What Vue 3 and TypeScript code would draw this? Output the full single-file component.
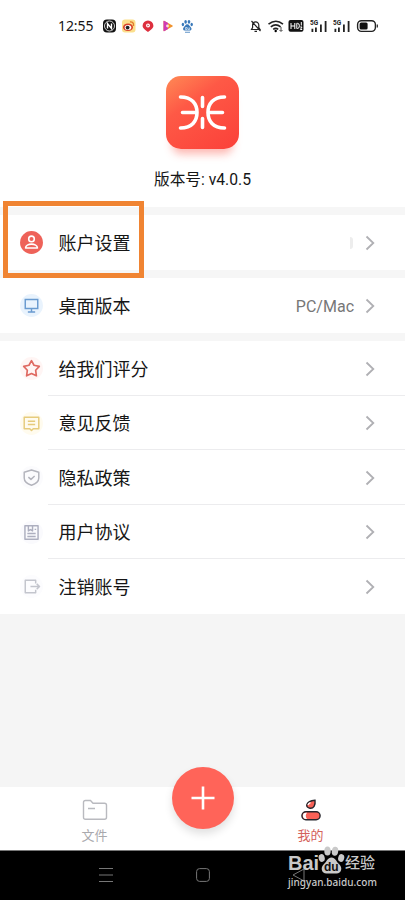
<script setup lang="ts">
interface Item {
  label: string
  icon: 'star' | 'note' | 'shield' | 'doc' | 'exit'
}

const items: Item[] = [
  { label: '给我们评分', icon: 'star' },
  { label: '意见反馈', icon: 'note' },
  { label: '隐私政策', icon: 'shield' },
  { label: '用户协议', icon: 'doc' },
  { label: '注销账号', icon: 'exit' },
]
</script>

<template>
  <div class="phone">
    <header class="status">
      <span class="clock">12:55</span>
      <svg class="apps" width="96" height="16" viewBox="0 0 96 16">
        <rect x="1" y="1.5" width="13" height="13" rx="4" fill="#111" />
        <circle cx="7.5" cy="8" r="5" fill="none" stroke="#fff" stroke-width="0.8" />
        <path d="M5.5 10.5v-5l4 5v-5" fill="none" stroke="#fff" stroke-width="1.4" />
        <rect x="20" y="1.5" width="13.5" height="13" rx="3" fill="#fbdf8c" />
        <ellipse cx="26" cy="9.3" rx="5" ry="3.8" fill="#d8432c" />
        <ellipse cx="26" cy="9.5" rx="3.3" ry="2.5" fill="#fff" />
        <circle cx="25.6" cy="9.6" r="1.9" fill="#222" />
        <path d="M28 4q4-.5 3.5 4" fill="none" stroke="#e27a2e" stroke-width="1.3" />
        <path d="M46 2.5a5.400 5.200 0 0 1 5.400 5.200c0 2.600-2.600 4-5.400 6.300-2.800-2.300-5.400-3.700-5.400-6.300A5.400 5.200 0 0 1 46 2.500z" fill="#dd2f3e" />
        <circle cx="46" cy="7.6" r="2" fill="#fff" />
        <path d="M45.400 6.600l1.700 1-1.700 1z" fill="#dd2f3e" />
        <path d="M61.500 3.500q0-1 1-.5l8 4.500q.7.5 0 1l-8 4.500q-1 .5-1-.5z" fill="#f0932e" />
        <path d="M61.500 3.500q0-1 1-.5l3.500 2v6l-3.500 2q-1 .5-1-.5z" fill="#cf3bb5" />
        <circle cx="65.500" cy="8" r="1.400" fill="#fbe3d0" />
        <g fill="#3979ba">
          <ellipse cx="80.900" cy="6.500" rx="1.200" ry="1.700" />
          <ellipse cx="83.600" cy="3.800" rx="1.300" ry="1.900" />
          <ellipse cx="87" cy="3.800" rx="1.300" ry="1.900" />
          <ellipse cx="89.700" cy="6.500" rx="1.200" ry="1.700" />
          <path d="M85.300 6.300c2 0 2.200 2 3.500 3s.9 3.500-1.200 3.300h-4.600c-2.100.2-2.500-2.300-1.200-3.300s1.500-3 3.500-3z" />
          <rect x="83" y="13.800" width="5" height="0.800" />
        </g>
        <path d="M83.500 9.500h1.500v2h-1.500zM86 9.500v2h1.600v-2" fill="none" stroke="#fff" stroke-width="0.600" />
      </svg>
      <svg class="signals" width="130" height="16" viewBox="0 0 130 16">
        <g fill="none" stroke="#222" stroke-width="1.200">
          <path d="M2.500 11.500h8.500l-1.200-2V7a3.100 3.100 0 0 0-6.200 0v2.500zM5.500 13.300H8M2.500 3l9 10" />
        </g>
        <g fill="none" stroke="#222" stroke-width="1.600">
          <path d="M19.500 6.200q7.500-5.800 14.500 0M21.800 8.900q5-4 9.800 0M24.200 11.400q2.500-2 5 0" />
        </g>
        <circle cx="26.700" cy="13" r="1.200" />
        <path d="M32 9v4M30.500 12l1.500 1.500 1.500-1.500" fill="none" stroke="#222" stroke-width="0.800" />
        <rect x="39.500" y="2" width="15" height="11.800" rx="2" fill="#111" />
        <path d="M42 5v6M45.800 5v6M42 8h3.800M47.800 5.300v5.200h.6q2 0 2-2.600t-2-2.600zM52.300 4v3.500M51.200 9h1.800l-1.600 2.500h1.800" fill="none" stroke="#fff" stroke-width="1" />
        <g fill="#222">
          <text x="61" y="7.200">5G</text>
          <path d="M62.500 10.800h1.800V14h-1.800zM66 9.500h1.800V14H66zM71 6.500h1.800V14H71zM75.700 3h1.800v11h-1.800z" />
          <text x="84" y="7.200">5G</text>
          <path d="M85.500 10.800h1.800V14h-1.800zM89 9.500h1.800V14H89zM94 6.500h1.800V14H94zM98.700 3h1.800v11h-1.800z" />
        </g>
        <rect x="108.600" y="2.700" width="17.800" height="10.700" rx="3.800" fill="none" stroke="#222" stroke-width="1.400" />
        <rect x="110.600" y="4.600" width="8" height="6.900" rx="1.500" fill="#111" />
        <path d="M128.300 6.500v3" stroke="#222" stroke-width="1.200" />
      </svg>
    </header>

    <section class="brand">
      <div class="logo">
        <svg width="73" height="73" viewBox="0 0 73 73" fill="none" stroke="#fff" stroke-width="3.600" stroke-linecap="round">
          <path d="M14.500 21c11.500 0 16.500 7 16.500 15.500S26 52 14.500 52M16.500 36.500H30M58.500 21C47 21 42 28 42 36.500S47 52 58.500 52M56.500 36.500H43M36.500 21.500v9M36.500 42.500v9" />
        </svg>
      </div>
      <div class="version">版本号: v4.0.5</div>
    </section>

    <div class="row account">
      <svg class="icon" viewBox="0 0 24 24">
        <circle cx="12" cy="12" r="11" fill="#ee6259" />
        <g fill="none" stroke="#fff" stroke-width="1.500">
          <circle cx="12" cy="8.600" r="2.700" />
          <path d="M6.300 17.300c0-5 11.400-5 11.400 0z" stroke-linejoin="round" />
        </g>
      </svg>
      <span class="label">账户设置</span>
      <span class="ghost"></span>
      <svg class="arrow" viewBox="0 0 10 16"><path d="M1.500 1.500L8.300 8l-6.800 6.500" /></svg>
    </div>

    <div class="row desktop">
      <svg class="icon" viewBox="0 0 24 24">
        <circle cx="12" cy="12" r="11" fill="#e9f3fd" />
        <path d="M6 6.300h12v8.500H6zM12 15v2.700M8.500 18.200h7" fill="none" stroke="#6a9bd0" stroke-width="1.400" />
      </svg>
      <span class="label">桌面版本</span>
      <span class="value">PC/Mac</span>
      <svg class="arrow" viewBox="0 0 10 16"><path d="M1.500 1.500L8.300 8l-6.800 6.500" /></svg>
    </div>

    <main class="list">
      <div v-for="item in items" :key="item.icon" class="row item">
        <svg class="icon" viewBox="0 0 24 24" fill="none" stroke-width="1.400" stroke-linejoin="round">
          <template v-if="item.icon === 'star'">
            <circle cx="12" cy="12" r="11" fill="#fff5f4" />
            <path d="M12 4.500l2.400 4.400 5.100 1-3.500 3.800.7 5.300-4.700-2.200L7.300 19l.7-5.300-3.500-3.800 5.100-1z" stroke="#df6961" stroke-width="1.600" />
          </template>
          <template v-else-if="item.icon === 'note'">
            <circle cx="12" cy="12" r="11" fill="#fffbee" />
            <path d="M5 6h14v11h-5.300L12 18.800 10.300 17H5zM8.500 9.800h7M8.500 13h7" stroke="#e6cb7c" />
          </template>
          <template v-else-if="item.icon === 'shield'">
            <circle cx="12" cy="12" r="11" fill="#fbfbfd" />
            <path d="M12 4.800l7 2.200v5.500c0 3.200-2.500 5.500-7 7-4.500-1.500-7-3.800-7-7V7zM9 11.600l2.500 2.200 3.500-3.200" stroke="#b3b4bc" />
          </template>
          <template v-else-if="item.icon === 'doc'">
            <circle cx="12" cy="12" r="11" fill="#fafafd" />
            <path d="M5.700 5.500h12.600v13H5.700zM9 5.500v5l2-1.300 2 1.300v-5M15 9h1.500M8 13h8M8 15.800h8" stroke="#adafbf" />
          </template>
          <template v-else>
            <circle cx="12" cy="12" r="11" fill="#fcfcfe" />
            <path d="M16 9V6H6v12h10v-3M11 12h9M17 9.500l2.700 2.500-2.700 2.500" stroke="#c3c5cd" />
          </template>
        </svg>
        <span class="label">{{ item.label }}</span>
        <svg class="arrow" viewBox="0 0 10 16"><path d="M1.500 1.500L8.300 8l-6.800 6.500" /></svg>
      </div>
    </main>

    <div class="filler"></div>

    <footer class="tabs">
      <div class="tab">
        <svg width="26" height="22" viewBox="0 0 26 22" fill="none" stroke="#b9babf" stroke-width="1.400">
          <path d="M1.500 3.500q0-2 2-2h5L11 4.200h11.500q2 0 2 2v12q0 2-2 2h-19q-2 0-2-2zM6 9.500h7" />
        </svg>
        <span>文件</span>
      </div>
      <button class="add" aria-label="add">
        <svg width="24" height="24" viewBox="0 0 24 24"><path d="M12 .5v23M.5 12h23" stroke="#fff" stroke-width="2.600" /></svg>
      </button>
      <div class="tab active">
        <svg width="22" height="22" viewBox="0 0 22 22" stroke="#24252c" stroke-width="1.400">
          <path d="M15 1.200c.7 5.300-1.500 8.300-5 8-5-.5-5-7 5-8z" fill="#f86157" />
          <path d="M8 6q.7-1.700 2.500-2.300" fill="none" stroke="#fff" />
          <rect x="1.900" y="12.800" width="18.200" height="8" rx="4" fill="#f86157" />
          <path d="M7 13.700H6a3.100 3.100 0 0 0 0 6.200h1a5 5 0 0 1 0-6.200z" fill="#fff" stroke="none" />
        </svg>
        <span>我的</span>
      </div>
    </footer>

    <nav class="nav">
      <svg width="14" height="14" viewBox="0 0 14 14"><path d="M0 .5h14M0 7h14M0 13.500h14" /></svg>
      <svg width="14" height="14" viewBox="0 0 14 14"><rect x=".6" y=".6" width="12.800" height="12.800" rx="3" /></svg>
      <svg width="14" height="14" viewBox="0 0 14 14"><path d="M12 1v12L1 7z" /></svg>
    </nav>

    <div class="highlight"></div>

    <div class="mark">
      <div class="mark-top">
        <span class="latin">Bai</span>
        <svg width="27" height="29" viewBox="0 0 27 29">
          <g fill="#c9c9c9">
            <ellipse cx="3.700" cy="12" rx="3" ry="4" transform="rotate(-15 3.700 12)" />
            <ellipse cx="9.500" cy="5" rx="3.200" ry="4.500" />
            <ellipse cx="17" cy="5.300" rx="3.200" ry="4.500" transform="rotate(8 17 5.300)" />
            <ellipse cx="23.200" cy="12" rx="3" ry="4" transform="rotate(15 23.200 12)" />
            <path d="M13.500 11.500c4 0 4.500 4 7.500 6.500 4 3.500 2.500 9.500-2.500 9.500h-10c-5 0-6.500-6-2.500-9.500 3-2.500 3.500-6.500 7.500-6.500z" />
          </g>
          <text x="13.300" y="25" text-anchor="middle">du</text>
        </svg>
        <span class="cn">经验</span>
      </div>
      <div class="mark-url">jingyan.baidu.com</div>
    </div>
  </div>
</template>

<style>
body {
  margin: 0;
  background: #fff;
}
</style>

<style scoped>
.phone {
  position: relative;
  box-sizing: border-box;
  width: 405px;
  height: 900px;
  overflow: hidden;
  display: flex;
  flex-direction: column;
  background: #fff;
  color: #161616;
  font-family: Roboto, "Noto Sans CJK SC", sans-serif;
}
.status {
  height: 52px;
  box-sizing: border-box;
  padding: 0 24px 0 58px;
  display: flex;
  align-items: center;
  flex-shrink: 0;
}
.clock {
  width: 44px;
  font-size: 14px;
  line-height: 20px;
  padding-bottom: 1px;
  font-family: "Noto Sans", sans-serif;
  letter-spacing: -0.1px;
}
.signals {
  margin-left: 51px;
  flex-shrink: 0;
}
.apps {
  flex-shrink: 0;
}
.signals text {
  font: bold 6.5px Roboto, sans-serif;
}
.brand {
  height: 155px;
  box-sizing: border-box;
  padding-top: 24px;
  display: flex;
  flex-direction: column;
  align-items: center;
  flex-shrink: 0;
}
.logo {
  width: 73px;
  height: 73px;
  border-radius: 15px;
  background: linear-gradient(145deg, #ff8a55 0%, #fe5946 35%, #fb4039 100%);
  box-shadow: 0 11px 9px -6px rgba(250, 75, 60, 0.4);
}
.version {
  margin-top: 18px;
  font-size: 15.7px;
  line-height: 25px;
}
.row {
  box-sizing: border-box;
  padding: 0 30px 0 19px;
  display: flex;
  align-items: center;
  flex-shrink: 0;
}
.account {
  height: 71px;
  border-top: 8px solid #f6f6f6;
  border-bottom: 8px solid #f6f6f6;
}
.desktop {
  height: 63px;
  border-bottom: 8px solid #f6f6f6;
}
.icon {
  width: 25px;
  height: 25px;
  margin-right: 14.5px;
}
.label {
  flex: 1;
  font-size: 18px;
  line-height: 26px;
  padding-top: 2px;
}
.value {
  color: #777;
  font-size: 16px;
  margin-right: 11px;
  padding-top: 1px;
}
.ghost {
  width: 3px;
  height: 12px;
  margin-right: 12px;
  border-radius: 0 4px 4px 0;
  background: #ededed;
}
.arrow {
  width: 10px;
  height: 16px;
  fill: none;
  stroke: #b0b0b4;
  stroke-width: 1.8;
}
.item {
  height: 54.5px;
  padding-top: 1px;
  background: linear-gradient(#ececee, #ececee) 48px 100% / 100% 1px no-repeat;
}
.item:last-child {
  background: none;
}
.filler {
  flex: 1;
  background: #f5f5f5;
}
.tabs {
  height: 63px;
  flex-shrink: 0;
  display: grid;
  grid-template-columns: 189px 27px 189px;
  background: #fff;
}
.tab {
  display: flex;
  flex-direction: column;
  align-items: center;
  padding-top: 12px;
  gap: 5px;
  font-size: 13px;
  line-height: 20px;
  color: #a9a9ad;
}
.active {
  color: #d4625b;
}
.add {
  width: 62px;
  height: 62px;
  margin: -20px 0 0 -17.5px;
  padding: 0;
  border: 0;
  border-radius: 50%;
  background: #ff6459;
  box-shadow: 0 5px 9px rgba(0, 0, 0, 0.12);
  display: flex;
  align-items: center;
  justify-content: center;
}
.nav {
  height: 50px;
  box-sizing: border-box;
  padding: 0 99px 1px;
  flex-shrink: 0;
  display: flex;
  justify-content: space-between;
  align-items: center;
  background: #000;
  border-top: 1px solid #777;
}
.nav svg {
  fill: none;
  stroke: #777;
  stroke-width: 1;
}
.highlight {
  position: absolute;
  left: 3px;
  top: 201px;
  width: 141px;
  height: 77px;
  box-sizing: border-box;
  border: 5px solid #f08432;
}
.mark {
  position: absolute;
  left: 288px;
  top: 845px;
  color: #c9c9c9;
}
.mark-top {
  display: flex;
  align-items: flex-end;
  height: 30px;
}
.latin {
  width: 30px;
  font: bold 20px/24px "Liberation Sans", sans-serif;
}
.mark-top svg {
  flex-shrink: 0;
}
.mark-top text {
  font: bold 12px "Liberation Sans", sans-serif;
  fill: #111;
}
.cn {
  font-size: 15px;
  line-height: 23px;
  font-weight: 500;
  white-space: nowrap;
}
.mark-url {
  font: 500 10px/14px "Noto Sans", sans-serif;
  letter-spacing: 0.05px;
}
</style>
